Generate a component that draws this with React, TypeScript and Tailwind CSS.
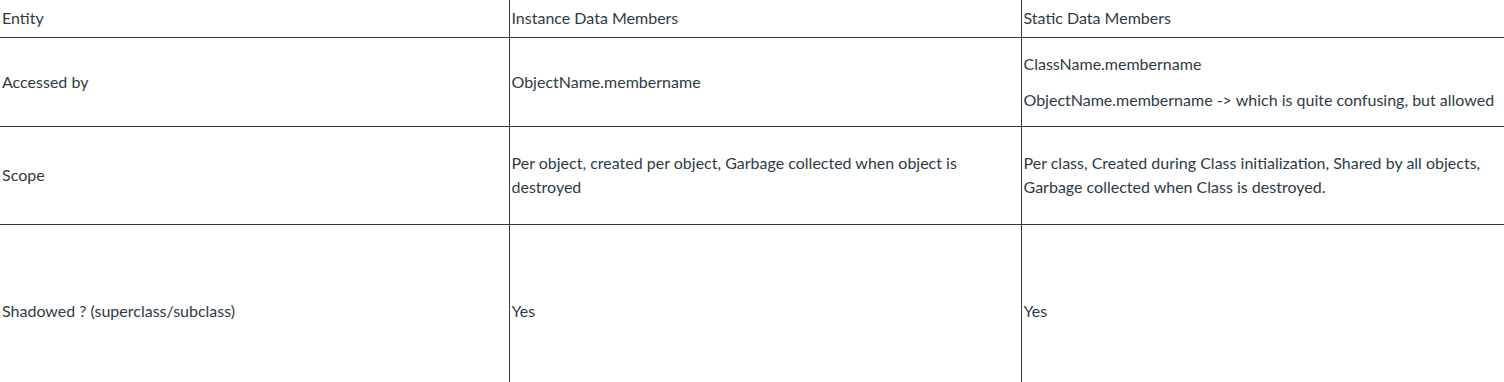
import React from "react";

const td = "border border-[#2d3b45] px-[2px] align-middle";

export default function App() {
  return (
    <div
      className="w-[1504px] h-[382px] overflow-hidden bg-white text-[#2d3b45] text-[16px] leading-[24px]"
      style={{ fontFamily: "Lato, 'Helvetica Neue', Arial, sans-serif" }}
    >
      <table className="w-[1504px] border-collapse border-hidden table-fixed">
        <colgroup>
          <col className="w-[509px]" />
          <col className="w-[512px]" />
          <col className="w-[483px]" />
        </colgroup>
        <tbody>
          <tr className="h-[37px]">
            <td className={td}>Entity</td>
            <td className={td}>Instance Data Members</td>
            <td className={td}>Static Data Members</td>
          </tr>
          <tr className="h-[89px]">
            <td className={td}>Accessed by</td>
            <td className={td}>ObjectName.membername</td>
            <td className={td}>
              <p className="mb-[12px]">ClassName.membername</p>
              <p>ObjectName.membername -&gt; which is quite confusing, but allowed</p>
            </td>
          </tr>
          <tr className="h-[98px]">
            <td className={td}>Scope</td>
            <td className={td}>
              Per object, created per object, Garbage collected when object is destroyed
            </td>
            <td className={td}>
              Per class, Created during Class initialization, Shared by all objects, Garbage collected when Class is destroyed.
            </td>
          </tr>
          <tr className="h-[174px]">
            <td className={td}>Shadowed ? (superclass/subclass)</td>
            <td className={td}>Yes</td>
            <td className={td}>Yes</td>
          </tr>
        </tbody>
      </table>
    </div>
  );
}
